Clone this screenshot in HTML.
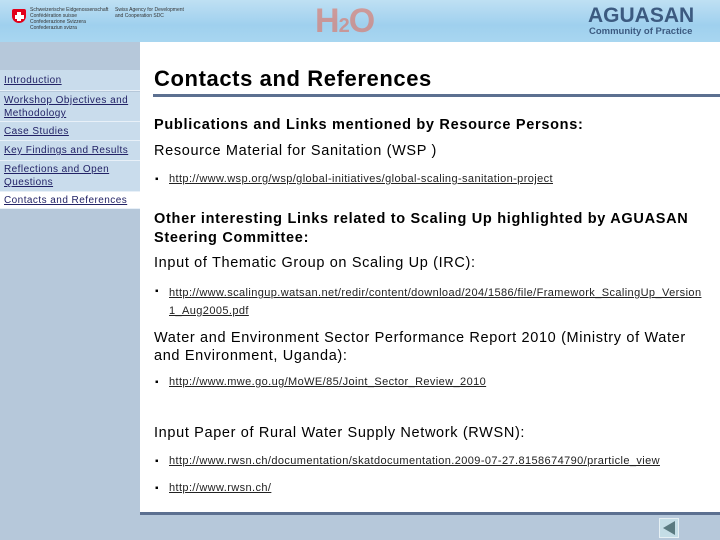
<!DOCTYPE html>
<html><head><meta charset="utf-8"><style>
*{margin:0;padding:0}
body{width:720px;height:540px;position:relative;overflow:hidden;background:#b6c8da;font-family:"Liberation Sans",Arial,sans-serif}
.a{position:absolute;white-space:nowrap}
#hdr{position:absolute;left:0;top:0;width:720px;height:42px;background:linear-gradient(180deg,#bfe0f3,#9fd0ee 60%,#a8d6f0)}
#main{position:absolute;left:140px;top:42px;width:580px;height:470px;background:#fff}
#foot{position:absolute;left:140px;top:512px;width:580px;height:3px;background:#5c7090}
.nav{position:absolute;left:0;width:140px;background:#c9dcec;border-bottom:1px solid #e8f0f8;font-size:10px;color:#222266;line-height:13px;padding-left:4px;box-sizing:border-box;letter-spacing:.45px}
.nav span{text-decoration:underline}
.b{font-weight:bold;font-size:14.5px;color:#000;letter-spacing:.7px}
.t{font-size:14.5px;color:#000;letter-spacing:.65px}
.l{font-size:11px;color:#222;text-decoration:underline;letter-spacing:.4px}
.d{position:absolute;font-size:10px;color:#000}
</style></head><body>
<div id="hdr">
 <div class="a" style="left:12px;top:9px;width:14px;height:14px;background:#e2001a;border-radius:2px 2px 7px 7px"></div>
 <div class="a" style="left:17px;top:12px;width:4px;height:9px;background:#fff"></div>
 <div class="a" style="left:14.5px;top:14.5px;width:9px;height:4px;background:#fff"></div>
 <div class="a" style="left:30px;top:7px;font-size:5px;line-height:6px;color:#333">Schweizerische Eidgenossenschaft<br>Confédération suisse<br>Confederazione Svizzera<br>Confederaziun svizra</div>
 <div class="a" style="left:115px;top:7px;font-size:5px;line-height:6px;color:#333">Swiss Agency for Development<br>and Cooperation SDC</div>
 <div class="a" style="left:315px;top:2px;font-size:34px;font-weight:bold;color:#e07060;opacity:.6;letter-spacing:-1px">H<span style="font-size:20px">2</span>O</div>
 <div class="a" style="left:588px;top:4px;font-size:21px;font-weight:bold;color:#3c5a80">AGUASAN</div>
 <div class="a" style="left:589px;top:26px;font-size:9.5px;font-weight:bold;color:#3c5a80">Community of Practice</div>
</div>
<div class="nav" style="top:70px;height:21px;padding-top:4px"><span>Introduction</span></div>
<div class="nav" style="top:92px;height:30px;padding-top:2px"><span>Workshop Objectives and Methodology</span></div>
<div class="nav" style="top:122px;height:19px;padding-top:3px"><span>Case Studies</span></div>
<div class="nav" style="top:141px;height:20px;padding-top:3px"><span>Key Findings and Results</span></div>
<div class="nav" style="top:161px;height:31px;padding-top:2px"><span>Reflections and Open Questions</span></div>
<div class="nav" style="top:192px;height:17px;padding-top:2px;background:#fff"><span>Contacts and References</span></div>
<div id="main"></div>
<div id="foot"></div>
<div class="a" style="left:154px;top:66px;font-size:22px;font-weight:bold;letter-spacing:.6px">Contacts and References</div>
<div class="a" style="left:153px;top:94px;width:567px;height:3px;background:#5c7090"></div>
<div class="a b" style="left:154px;top:117px">Publications and Links mentioned by Resource Persons:</div>
<div class="a t" style="left:154px;top:143px">Resource Material for Sanitation (WSP )</div>
<div class="d" style="left:155px;top:174px">▪</div><div class="a l" style="left:169px;top:173px">http://www.wsp.org/wsp/global-initiatives/global-scaling-sanitation-project</div>
<div class="a b" style="left:154px;top:210px;line-height:19px">Other interesting Links related to Scaling Up highlighted by AGUASAN<br>Steering Committee:</div>
<div class="a t" style="left:154px;top:255px">Input of Thematic Group on Scaling Up (IRC):</div>
<div class="d" style="left:155px;top:286px">▪</div><div class="a l" style="left:169px;top:284px;line-height:18px">http://www.scalingup.watsan.net/redir/content/download/204/1586/file/Framework_ScalingUp_Version<br>1_Aug2005.pdf</div>
<div class="a t" style="left:154px;top:329px;line-height:18px">Water and Environment Sector Performance Report 2010 (Ministry of Water<br>and Environment, Uganda):</div>
<div class="d" style="left:155px;top:377px">▪</div><div class="a l" style="left:169px;top:376px">http://www.mwe.go.ug/MoWE/85/Joint_Sector_Review_2010</div>
<div class="a t" style="left:154px;top:425px">Input Paper of Rural Water Supply Network (RWSN):</div>
<div class="d" style="left:155px;top:456px">▪</div><div class="a l" style="left:169px;top:455px">http://www.rwsn.ch/documentation/skatdocumentation.2009-07-27.8158674790/prarticle_view</div>
<div class="d" style="left:155px;top:483px">▪</div><div class="a l" style="left:169px;top:482px">http://www.rwsn.ch/</div>
<div class="a" style="left:659px;top:518px;width:20px;height:20px;background:#c4dde6;border:1px solid #e6f0f4;box-sizing:border-box"></div>
<div class="a" style="left:663px;top:521px;width:0;height:0;border-top:7px solid transparent;border-bottom:7px solid transparent;border-right:12px solid #5a7a80"></div>
</body></html>
